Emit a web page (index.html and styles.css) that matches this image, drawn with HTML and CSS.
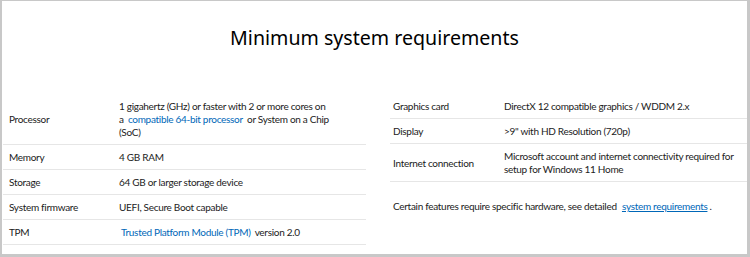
FILE: index.html
```html
<!DOCTYPE html>
<html>
<head>
<meta charset="utf-8">
<link rel="stylesheet" href="styles.css">
</head>
<body>
<div class="frame">
  <h1 class="title">Minimum system requirements</h1>
  <div class="cols">
    <div class="table left">
      <div class="row">
        <div class="label">Processor</div>
        <div class="value">1 gigahertz (GHz) or faster with 2 or more cores on<br>a <a href="#">compatible 64-bit processor</a> or System on a Chip<br>(SoC)</div>
      </div>
      <div class="row">
        <div class="label">Memory</div>
        <div class="value">4 GB RAM</div>
      </div>
      <div class="row">
        <div class="label">Storage</div>
        <div class="value">64 GB or larger storage device</div>
      </div>
      <div class="row">
        <div class="label">System firmware</div>
        <div class="value">UEFI, Secure Boot capable</div>
      </div>
      <div class="row">
        <div class="label">TPM</div>
        <div class="value"><a href="#">Trusted Platform Module (TPM)</a> version 2.0</div>
      </div>
    </div>
    <div class="right">
      <div class="table">
        <div class="row">
          <div class="label">Graphics card</div>
          <div class="value">DirectX 12 compatible graphics / WDDM 2.x</div>
        </div>
        <div class="row">
          <div class="label">Display</div>
          <div class="value">&gt;9" with HD Resolution (720p)</div>
        </div>
        <div class="row">
          <div class="label">Internet connection</div>
          <div class="value">Microsoft account and internet connectivity required for<br>setup for Windows 11 Home</div>
        </div>
      </div>
      <p class="note">Certain features require specific hardware, see detailed <a class="ul" href="#">system requirements</a>.</p>
    </div>
  </div>
</div>
</body>
</html>
```
FILE: styles.css
```css
html, body {
  margin: 0;
  padding: 0;
  background: #fff;
}
.frame {
  box-sizing: border-box;
  width: 750px;
  height: 257px;
  border-style: solid;
  border-color: #c8c8c8;
  border-width: 1px 3px 3px 2px;
  font-family: "Lato", "Noto Sans", sans-serif;
  color: #222;
}
.title {
  margin: 0;
  padding-top: 24px;
  height: 68px;
  box-sizing: border-box;
  text-align: center;
  font-family: "Noto Sans", sans-serif;
  font-size: 19.6px;
  line-height: 26px;
  font-weight: 400;
  color: #000;
}
.cols {
  display: grid;
  grid-template-columns: 363px 1fr;
  column-gap: 24px;
  padding-left: 1px;
  padding-top: 25px;
}
.table {
  display: flex;
  flex-direction: column;
}
.row {
  display: flex;
  align-items: center;
  padding: 6px 0 5px;
  border-bottom: 1px solid #e6e6e6;
  font-size: 10px;
  line-height: 13px;
  letter-spacing: -0.3px;
}
.left .label {
  width: 110px;
  padding-left: 6px;
  flex: none;
}
.right .label {
  width: 111px;
  padding-left: 3px;
  flex: none;
}
.label {
  color: #1a1a1a;
}
.value {
  flex: 1;
  white-space: nowrap;
}
a {
  color: #0067b8;
  text-decoration: none;
  padding: 0 2px;
}
a.ul {
  text-decoration: underline;
  padding-left: 3px;
}
.note {
  margin: 18px 0 0 3px;
  font-size: 10px;
  line-height: 13px;
  letter-spacing: -0.3px;
}
```
